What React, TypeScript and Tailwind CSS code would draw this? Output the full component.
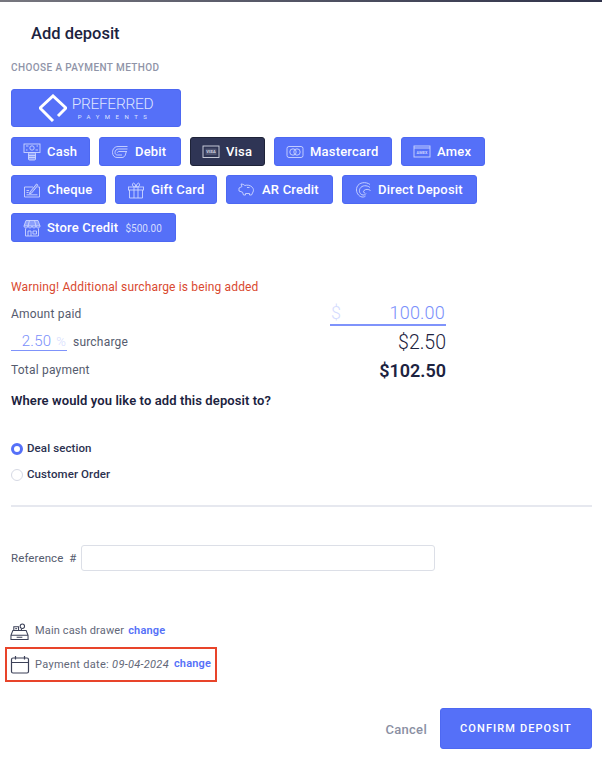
import type { ReactNode } from "react";

const FONT = "font-['Roboto',sans-serif]";

function Glyph({ children }: { children: ReactNode }) {
  return (
    <svg viewBox="0 0 18 18" fill="none" stroke="currentColor" strokeWidth="0.9" className="w-[18px] h-[18px] shrink-0">
      {children}
    </svg>
  );
}

const cash = (
  <Glyph>
    <rect x="1" y="1" width="16" height="8.500" />
    <circle cx="9" cy="5" r="2.200" />
    <path d="M3 3h2.500M12.500 7H15M3 7h1.500M13.500 3H15" />
    <rect x="5.500" y="9.500" width="7" height="7.500" rx="1" fill="currentColor" fillOpacity="0.45" />
    <path d="M5.500 12.500h7M5.500 14.500h7" />
  </Glyph>
);
const debit = (
  <Glyph>
    <path d="M16.500 3.500H7C3.800 3.500 1.500 6 1.500 9.500 1.500 12.500 3.500 14.500 6 14.500h5c1.500 0 2.800-1 3.300-2.500l1-3.500" />
    <path d="M16.500 6H7.500C5.500 6 4 7.500 4 9.500c0 1.500 1 2.500 2.500 2.500H11" />
    <path d="M16 8.500H8c-1 0-1.500.5-1.500 1.200" />
  </Glyph>
);
const visa = (
  <Glyph>
    <rect x="1" y="3" width="16" height="11.500" />
    <rect x="3.500" y="5.500" width="11" height="6.500" fill="currentColor" fillOpacity="0.2" stroke="none" />
    <text x="9" y="10.200" textAnchor="middle" fontSize="4" fontWeight="700" fill="currentColor" stroke="none">
      VISA
    </text>
  </Glyph>
);
const mastercard = (
  <Glyph>
    <rect x="1" y="3.500" width="16" height="11" rx="2" />
    <circle cx="7" cy="9" r="3.200" />
    <circle cx="11" cy="9" r="3.200" />
  </Glyph>
);
const amex = (
  <Glyph>
    <rect x="1" y="3" width="16" height="11" />
    <path d="M1 5h16" />
    <text x="9" y="10.700" textAnchor="middle" fontSize="3.800" fontWeight="700" fill="currentColor" stroke="none">
      AMEX
    </text>
  </Glyph>
);
const cheque = (
  <Glyph>
    <path d="M10 6H1.500v10h15V6h-2" />
    <path d="M7 11 13.500 3l1.500 1.200-6.500 8-2 .5z" fill="currentColor" fillOpacity="0.3" />
    <path d="M3.500 9.500h2.500M3.500 11.500h2M3.500 13.800h11" />
  </Glyph>
);
const gift = (
  <Glyph>
    <rect x="1.500" y="6" width="15" height="3" />
    <path d="M2.500 9v8h13V9M7 6v11M11 6v11" />
    <path d="M9 6C6 6 5 4.500 5.500 3S8 1.500 9 6c1-4.500 3-4.500 3.500-3S12 6 9 6z" />
  </Glyph>
);
const piggy = (
  <Glyph>
    <path d="M4 5.500 3 3c1.500 0 2.800.5 3.800 1.500C9 3.800 12.500 4 14.500 6.500c1 1.300 1.300 3 .5 4.500l-1.500 3h-2v-1.500h-4V14h-2l-1-2.800L1 10V7z" />
    <path d="M9 6.500h2.500" />
  </Glyph>
);
const directDeposit = (
  <Glyph>
    <path d="M16 3.500C12 .5 5 1 3 6c-1.500 4 .5 8 3.500 9.500 2 1 4 .5 5-.5" />
    <path d="M16 6.500C13 4 8 4 6 7.500c-1.500 3 0 6 3 6.500 1.500.2 2.500-.5 3-1.500" />
    <path d="M16.500 9.500c-2-1.500-5-1.500-6.500 0-1 1-.5 2.500 1 2.500" />
  </Glyph>
);
const store = (
  <Glyph>
    <path d="M3 1.500h12l2 5.500H1z" fill="currentColor" fillOpacity="0.45" />
    <path d="M1 7c0 2.500 4 2.500 4 0 0 2.500 4 2.500 4 0 0 2.500 4 2.500 4 0 0 2.500 4 2.500 4 0" />
    <path d="M2.500 9.500V17h13V9.500M5 17v-5h3v5M10 12h3.500v3H10zM6.500 1.500 5 7M11.500 1.500 13 7" />
  </Glyph>
);

type Method = { label: string; icon: ReactNode; width: string; active?: boolean; note?: string };

const rows: Method[][] = [
  [
    { label: "Cash", icon: cash, width: "w-[79px]" },
    { label: "Debit", icon: debit, width: "w-[82px]" },
    { label: "Visa", icon: visa, width: "w-[75px]", active: true },
    { label: "Mastercard", icon: mastercard, width: "w-[118px]" },
    { label: "Amex", icon: amex, width: "w-[84px]" },
  ],
  [
    { label: "Cheque", icon: cheque, width: "w-[95px]" },
    { label: "Gift Card", icon: gift, width: "w-[102px]" },
    { label: "AR Credit", icon: piggy, width: "w-[107px]" },
    { label: "Direct Deposit", icon: directDeposit, width: "w-[135px]" },
  ],
  [{ label: "Store Credit", icon: store, width: "w-[165px]", note: "$500.00" }],
];

function MethodButton({ method }: { method: Method }) {
  return (
    <button
      className={`${method.width} h-[29px] flex items-center justify-start gap-[6px] pl-[11px] rounded-[3px] border text-[13px] font-medium tracking-[0.2px] whitespace-nowrap ${
        method.active ? "bg-[#2f3555] border-[#1e2338] text-white" : "bg-[#5570f8] border-[#4d68f2] text-white"
      }`}
    >
      <span className={method.active ? "text-[#d5d8e4]" : "text-[#cdd6ff]"}>{method.icon}</span>
      <span className="pt-[1px]">{method.label}</span>
      {method.note && <span className="ml-[1px] pt-[1px] text-[10px] font-normal tracking-normal text-[#d4dcff]">{method.note}</span>}
    </button>
  );
}

export default function App() {
  return (
    <div className={`${FONT} w-[602px] h-[767px] overflow-hidden bg-white text-[#1c2340]`}>
      <div className="h-[2px] bg-gradient-to-r from-[#77777f] to-[#30334a]" />

      <h1 className="ml-[31px] mt-[22px] text-[16.500px] leading-[20px] font-medium">Add deposit</h1>

      <div className="ml-[11px] mt-[18px] text-[10px] leading-[12px] font-medium tracking-[0.4px] text-[#8f94a8]">
        CHOOSE A PAYMENT METHOD
      </div>

      {/* Payment methods */}
      <div className="ml-[11px] mt-[15px] flex flex-col gap-[9px]">
        <button className="mb-[1px] w-[170px] h-[38px] flex items-center justify-center gap-[5px] rounded-[3px] border border-[#4d68f2] bg-[#5570f8] text-[#dfe5ff]">
          <svg viewBox="0 0 28 28" className="w-[28px] h-[28px]" fill="none" stroke="white" strokeWidth="3">
            <path d="M19 22 27 14 14 2 1 14 14 27" />
          </svg>
          <span className="flex flex-col items-center">
            <span className="text-[15.500px] leading-[14px] font-light tracking-[-0.300px]">PREFERRED</span>
            <span className="mt-[2px] mr-[-5px] text-[6px] leading-[7px] tracking-[5.500px]">PAYMENTS</span>
          </span>
        </button>
        {rows.map((row, i) => (
          <div key={i} className="flex gap-[9px]">
            {row.map((method) => (
              <MethodButton key={method.label} method={method} />
            ))}
          </div>
        ))}
      </div>

      <p className="ml-[11px] mt-[38px] text-[12px] leading-[15px] tracking-[0.15px] text-[#d9492f]">
        Warning! Additional surcharge is being added
      </p>

      {/* Amounts */}
      <div className="ml-[11px] w-[435px] mt-[6px] flex flex-col text-[12px] tracking-[0.2px] text-[#555b6e]">
        <div className="h-[25px] flex items-center justify-between">
          <span>Amount paid</span>
          <div className="w-[116px] h-[25px] flex items-center justify-between px-[1px] border-b-2 border-[#7f93fb] text-[18px] font-light text-[#7a8ffb]">
            <span className="text-[#d5dcfe]">$</span>
            <span>100.00</span>
          </div>
        </div>
        <div className="h-[32px] flex items-center justify-between">
          <div className="flex items-center gap-[6px]">
            <div className="w-[56px] h-[17px] flex items-center justify-end gap-[5px] pr-[1px] border-b border-[#7f93fb] text-[15px] font-light text-[#7a8ffb]">
              <span>2.50</span>
              <span className="text-[#d5dcfe] text-[13px]">%</span>
            </div>
            <span>surcharge</span>
          </div>
          <span className="pt-[2px] text-[19.500px] font-light text-[#1c2340] tracking-normal">$2.50</span>
        </div>
        <div className="h-[24px] flex items-center justify-between">
          <span>Total payment</span>
          <span className="text-[18px] font-semibold text-[#1c2340] tracking-normal">$102.50</span>
        </div>
      </div>

      <p className="ml-[11px] mt-[11px] text-[13px] leading-[16px] font-semibold tracking-[0.1px]">
        Where would you like to add this deposit to?
      </p>

      {/* Destination */}
      <div className="ml-[11px] mt-[34px] flex flex-col gap-[14px] text-[11.500px] font-medium tracking-[0.1px] text-[#2b3150]">
        <label className="h-[12px] flex items-center gap-[4px]">
          <span className="w-[12px] h-[12px] rounded-full border-[3.500px] border-[#5570f8] bg-white" />
          Deal section
        </label>
        <label className="h-[12px] flex items-center gap-[4px]">
          <span className="w-[12px] h-[12px] rounded-full border border-[#d6d9e4] bg-white" />
          Customer Order
        </label>
      </div>

      <hr className="ml-[11px] w-[581px] mt-[24px] border-t-2 border-[#e6e8ef]" />

      <div className="ml-[11px] mt-[38px] flex items-center text-[11.500px] tracking-[0.1px] text-[#555b6e]">
        <span className="w-[70px] shrink-0 pt-[2px]">Reference&nbsp; #</span>
        <div className="w-[354px] h-[26px] rounded-[3px] border border-[#dcdfe7] bg-white" />
      </div>

      {/* Drawer and date */}
      <div className="ml-[10px] mt-[48px] h-[24px] flex items-center gap-[6px] text-[11px] tracking-[0.15px] text-[#626778] whitespace-nowrap">
        <svg viewBox="0 0 20 20" fill="none" stroke="#3c4158" strokeWidth="1.100" className="w-[19px] h-[19px] shrink-0">
          <path d="M1 18.500V14l2-5h14l2 5v4.500zM1 14h18M7 16h6M4 9V5h5v4M12 9V7" />
          <circle cx="13" cy="4.500" r="2.300" />
          <path d="M5.500 7h2" />
        </svg>
        <span>Main cash drawer</span>
        <a className="ml-[-2px] font-semibold text-[#5570f8]">change</a>
      </div>

      <div className="ml-[5px] mt-[4px] w-[212px] h-[35px] flex items-center gap-[5px] pl-[3px] border-2 border-[#e8442a] text-[11px] tracking-[0.3px] text-[#626778] whitespace-nowrap">
        <svg viewBox="0 0 20 20" fill="none" stroke="#3c4158" strokeWidth="1.200" className="w-[20px] h-[20px] shrink-0">
          <rect x="1.500" y="3" width="17" height="15" rx="1.500" />
          <path d="M1.500 7.500h17M5.500 1v3.500M14.500 1v3.500" />
        </svg>
        <span className="pt-[2px]">
          Payment date: <em>09-04-2024</em>
        </span>
        <a className="font-semibold tracking-[0.15px] text-[#5570f8]">change</a>
      </div>

      {/* Footer */}
      <div className="mt-[26px] mr-[10px] flex items-center justify-end gap-[13px]">
        <button className="pt-[2px] text-[13px] font-medium tracking-[0.3px] text-[#8b90a3]">Cancel</button>
        <button className="w-[152px] h-[41px] pt-[2px] rounded-[3px] bg-[#5570f8] border border-[#4d68f2] text-[11px] font-medium tracking-[1.100px] text-white">
          CONFIRM DEPOSIT
        </button>
      </div>
    </div>
  );
}
